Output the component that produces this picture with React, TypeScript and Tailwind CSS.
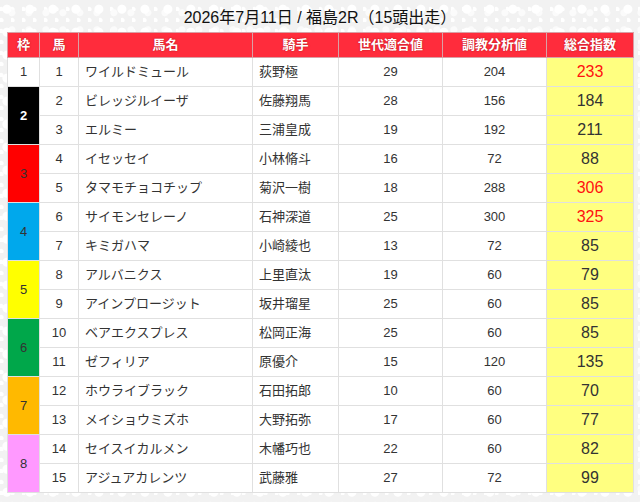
type Horse = {
  no: number
  name: string
  jockey: string
  gen: number
  train: number
  total: number
}

const horses: Horse[] = [
  { no: 1, name: 'ワイルドミュール', jockey: '荻野極', gen: 29, train: 204, total: 233 },
  { no: 2, name: 'ビレッジルイーザ', jockey: '佐藤翔馬', gen: 28, train: 156, total: 184 },
  { no: 3, name: 'エルミー', jockey: '三浦皇成', gen: 19, train: 192, total: 211 },
  { no: 4, name: 'イセッセイ', jockey: '小林脩斗', gen: 16, train: 72, total: 88 },
  { no: 5, name: 'タマモチョコチップ', jockey: '菊沢一樹', gen: 18, train: 288, total: 306 },
  { no: 6, name: 'サイモンセレーノ', jockey: '石神深道', gen: 25, train: 300, total: 325 },
  { no: 7, name: 'キミガハマ', jockey: '小崎綾也', gen: 13, train: 72, total: 85 },
  { no: 8, name: 'アルバニクス', jockey: '上里直汰', gen: 19, train: 60, total: 79 },
  { no: 9, name: 'アインプロージット', jockey: '坂井瑠星', gen: 25, train: 60, total: 85 },
  { no: 10, name: 'ベアエクスプレス', jockey: '松岡正海', gen: 25, train: 60, total: 85 },
  { no: 11, name: 'ゼフィリア', jockey: '原優介', gen: 15, train: 120, total: 135 },
  { no: 12, name: 'ホウライブラック', jockey: '石田拓郎', gen: 10, train: 60, total: 70 },
  { no: 13, name: 'メイショウミズホ', jockey: '大野拓弥', gen: 17, train: 60, total: 77 },
  { no: 14, name: 'セイスイカルメン', jockey: '木幡巧也', gen: 22, train: 60, total: 82 },
  { no: 15, name: 'アジュアカレンツ', jockey: '武藤雅', gen: 27, train: 72, total: 99 },
]

// keyed by the first horse no of each frame
const frames: Record<number, { frame: number; span: number; cls: string }> = {
  1: { frame: 1, span: 1, cls: 'bg-white text-[#333]' },
  2: { frame: 2, span: 2, cls: 'bg-black text-white font-bold' },
  4: { frame: 3, span: 2, cls: 'bg-[#ff0000] text-[#333]' },
  6: { frame: 4, span: 2, cls: 'bg-[#00a8ec] text-[#333]' },
  8: { frame: 5, span: 2, cls: 'bg-[#ffff00] text-[#333]' },
  10: { frame: 6, span: 2, cls: 'bg-[#00a74a] text-[#333]' },
  12: { frame: 7, span: 2, cls: 'bg-[#ffb900] text-[#333]' },
  14: { frame: 8, span: 2, cls: 'bg-[#ff99ff] text-[#333]' },
}

const th =
  'h-[25px] border border-[#d9a0a6] bg-[#ff2c3c] p-0 text-center text-[13px] font-bold text-white [text-shadow:0_0_2px_rgba(120,0,0,0.6)]'
const td = 'h-[29px] border border-[#e0e0e0] p-0 text-[13px] text-[#333]'

export default function App() {
  return (
    <div
      className="min-h-[502px] w-[640px] bg-[#f2f2f2] px-[7px] pt-[8px] [font-family:'Liberation_Sans','Noto_Sans_CJK_JP',sans-serif] [background-image:radial-gradient(circle_at_30%_40%,#ffffff_0_4px,transparent_5px),radial-gradient(circle_at_70%_75%,#fbfbfb_0_3px,transparent_4px),radial-gradient(circle_at_10%_85%,#ffffff_0_2px,transparent_3px)] [background-size:23px_23px,17px_17px,11px_11px]"
    >
      <h1 className="mb-[4px] text-center text-[16px] font-normal leading-[20px] text-[#111]">
        2026年7月11日 / 福島2R（15頭出走）
      </h1>

      <table className="w-[626px] table-fixed border-collapse border border-[#bbb] bg-white">
        <colgroup>
          <col className="w-[32px]" />
          <col className="w-[39px]" />
          <col className="w-[174px]" />
          <col className="w-[86px]" />
          <col className="w-[104px]" />
          <col className="w-[104px]" />
          <col className="w-[87px]" />
        </colgroup>
        <thead>
          <tr>
            <th className={th}>枠</th>
            <th className={th}>馬</th>
            <th className={th}>馬名</th>
            <th className={th}>騎手</th>
            <th className={th}>世代適合値</th>
            <th className={th}>調教分析値</th>
            <th className={`${th} bg-[#f70000]`}>総合指数</th>
          </tr>
        </thead>
        <tbody>
          {horses.map((h) => {
            const f = frames[h.no]
            return (
              <tr key={h.no}>
                {f && (
                  <td rowSpan={f.span} className={`${td} text-center ${f.cls}`}>
                    {f.frame}
                  </td>
                )}
                <td className={`${td} text-center`}>{h.no}</td>
                <td className={`${td} pl-[6px]`}>{h.name}</td>
                <td className={`${td} pl-[6px]`}>{h.jockey}</td>
                <td className={`${td} text-center`}>{h.gen}</td>
                <td className={`${td} text-center`}>{h.train}</td>
                <td
                  className={`${td} bg-[#ffff80] text-center text-[16px] ${
                    h.total >= 230 ? 'text-[#ff1010]' : 'text-[#111]'
                  }`}
                >
                  {h.total}
                </td>
              </tr>
            )
          })}
        </tbody>
      </table>
    </div>
  )
}
